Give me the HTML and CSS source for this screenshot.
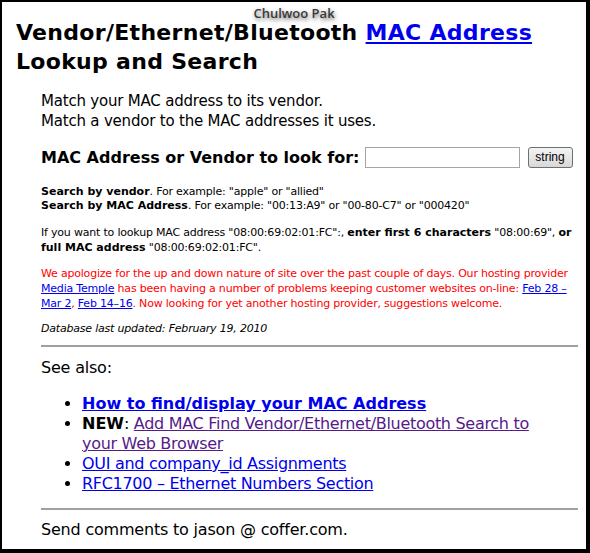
FILE: index.html
```html
<!DOCTYPE html>
<html>
<head>
<meta charset="utf-8">
<title>MAC Address Lookup</title>
<link rel="stylesheet" href="styles.css">
</head>
<body>
<div class="frame">
  <div class="tip">Chulwoo Pak</div>
  <h1 class="title">Vendor/Ethernet/Bluetooth <a href="#">MAC Address</a> Lookup and Search</h1>
  <div class="content">
    <p class="intro">Match your MAC address to its vendor.<br>Match a vendor to the MAC addresses it uses.</p>
    <form class="search">
      <label class="label">MAC Address or Vendor to look for:</label>
      <input class="field" type="text">
      <button class="btn" type="button">string</button>
    </form>
    <p class="small first"><b>Search by vendor</b>. For example: "apple" or "allied"<br><b>Search by MAC Address</b>. For example: "00:13:A9" or "00-80-C7" or "000420"</p>
    <p class="small">If you want to lookup MAC address "08:00:69:02:01:FC":, <b>enter first 6 characters</b> "08:00:69", <b>or full MAC address</b> "08:00:69:02:01:FC".</p>
    <p class="small red">We apologize for the up and down nature of site over the past couple of days. Our hosting provider <a href="#">Media Temple</a> has been having a number of problems keeping customer websites on-line: <a href="#">Feb 28 – Mar 2</a>, <a href="#">Feb 14–16</a>. Now looking for yet another hosting provider, suggestions welcome.</p>
    <p class="small date"><i>Database last updated: February 19, 2010</i></p>
    <hr class="rule">
    <p class="see">See also:</p>
    <ul class="links">
      <li><a href="#" class="strong">How to find/display your MAC Address</a></li>
      <li><b>NEW</b>: <a href="#" class="visited">Add MAC Find Vendor/Ethernet/Bluetooth Search to your Web Browser</a></li>
      <li><a href="#">OUI and company_id Assignments</a></li>
      <li><a href="#">RFC1700 – Ethernet Numbers Section</a></li>
    </ul>
    <hr class="rule rule2">
    <p class="foot">Send comments to jason @ coffer.com.</p>
  </div>
</div>
</body>
</html>
```

FILE: styles.css
```css
html, body {
  margin: 0;
  padding: 0;
  background: #fff;
}
.frame {
  position: relative;
  box-sizing: border-box;
  width: 590px;
  height: 553px;
  border-style: solid;
  border-color: #000;
  border-width: 2px 4px 4px 2px;
  padding: 0 0 0 14px;
  overflow: hidden;
  font-family: "DejaVu Sans", sans-serif;
  color: #000;
  letter-spacing: -0.2px;
}
b, .strong, .label { letter-spacing: 0; }
a { color: #0000ee; }
.tip {
  position: absolute;
  top: 2px;
  left: 0;
  right: 0;
  text-align: center;
  font-family: "Open Sans", sans-serif;
  font-weight: 600;
  font-size: 13px;
  letter-spacing: 0;
  color: #3a3a3a;
  text-shadow: 1px 2px 4px rgba(0,0,0,0.6);
}
.title {
  margin: 16px 0 0 0;
  font-size: 22px;
  line-height: 29px;
  font-weight: bold;
  letter-spacing: 0.3px;
  width: 560px;
}
.content {
  margin: 0 8px 0 25px;
}
.intro {
  margin: 15px 0 0 0;
  font-size: 15px;
  line-height: 20px;
}
.search {
  margin: 15px 0 0 0;
  display: flex;
  align-items: center;
  height: 22px;
}
.label {
  font-weight: bold;
  font-size: 16px;
}
.field {
  box-sizing: border-box;
  margin: 0 0 0 5px;
  width: 155px;
  height: 21px;
  border: 1px solid #a5a5a5;
  padding: 0;
}
.btn {
  box-sizing: border-box;
  margin: 0 0 0 8px;
  height: 21px;
  width: 45px;
  padding: 0;
  font-family: "Liberation Sans", sans-serif;
  font-size: 12px;
  letter-spacing: 0;
  color: #000;
  border: 1px solid #6f6f6f;
  border-radius: 3px;
  background: linear-gradient(#f4f4f4, #d8d8d8);
}
.small {
  margin: 12px 0 0 0;
  font-size: 11px;
  line-height: 15px;
}
.small.first {
  margin-top: 17px;
  line-height: 14px;
}
.red { color: #ff0000; margin-top: 11px; }
.date { margin-top: 10px; }
.rule {
  margin: 9px 0 0 0;
  border: 0;
  border-top: 2px solid #a0a0a0;
  height: 0;
}
.see {
  margin: 11px 0 0 0;
  font-size: 16px;
  line-height: 20px;
}
.links {
  margin: 16px 20px 0 0;
  padding: 0 0 0 41px;
  font-size: 16px;
  line-height: 20px;
  letter-spacing: -0.3px;
}
.links b, .links .strong { letter-spacing: 0; }
.strong { font-weight: bold; }
.visited { color: #551a8b; }
.rule2 { margin-top: 14px; }
.foot {
  margin: 10px 0 0 0;
  font-size: 16px;
  line-height: 20px;
}
```
